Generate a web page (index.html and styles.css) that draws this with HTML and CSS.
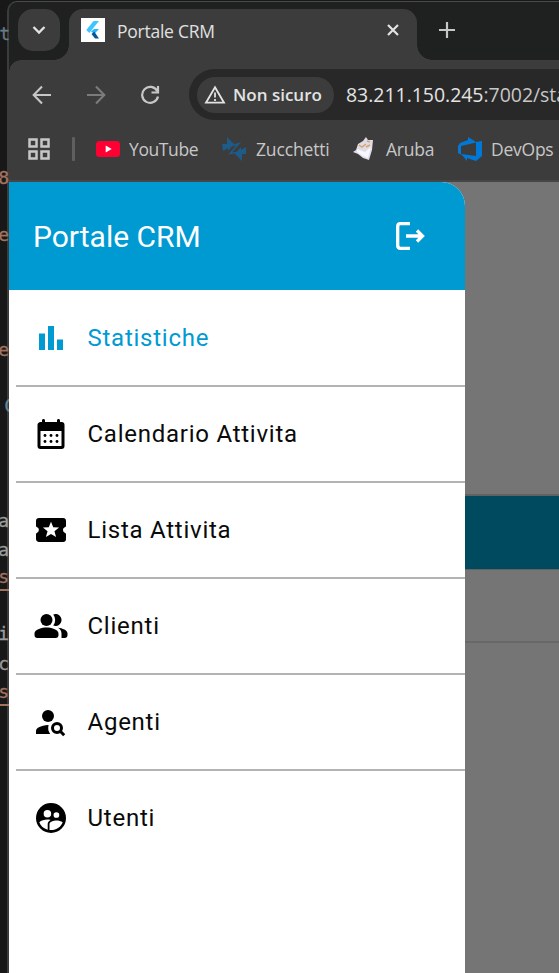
FILE: index.html
```html
<!DOCTYPE html>
<html lang="it">
<head>
<meta charset="utf-8">
<title>Portale CRM</title>
<link rel="stylesheet" href="styles.css">
</head>
<body>
<div class="window">
  <div class="tabs">
    <button class="tab-search"><svg width="14" height="10" viewBox="0 0 14 10"><path d="M1.500 2l5.500 5.500L12.500 2" fill="none" stroke="#e3e3e3" stroke-width="2.300"/></svg></button>
    <div class="tab">
      <svg class="favicon" width="24" height="24" viewBox="0 0 24 24"><path fill="#fff" d="M0 0h24v24H0z"/><path fill="#40c4ff" d="M12.500 3H18L8.300 15 5.300 12z"/><path fill="#29b6f6" d="M13 11h5l-4.700 5-3.300-2.500z"/><path fill="#01579b" d="M10.500 16l2.800-2.300L18 20.500h-4z"/></svg>
      <span class="tab-title">Portale CRM</span>
      <svg class="close" width="14" height="14" viewBox="0 0 14 14"><path d="M2 2l10 10M12 2L2 12" stroke="#e3e3e3" stroke-width="2.200"/></svg>
    </div>
    <svg class="plus" width="18" height="18" viewBox="0 0 18 18"><path d="M9 1v16M1 9h16" stroke="#c7c7c7" stroke-width="2.200"/></svg>
  </div>
  <div class="toolbar">
    <svg class="nav" width="20" height="20" viewBox="0 0 20 20"><path d="M19 10H2M10 1.500L1.700 10l8.300 8.500" fill="none" stroke="#c7c7c7" stroke-width="2.100"/></svg>
    <svg class="nav" width="20" height="20" viewBox="0 0 20 20"><path d="M1 10h17M10 1.500l8.300 8.500-8.300 8.500" fill="none" stroke="#7b7b7b" stroke-width="2.100"/></svg>
    <svg class="nav" width="20" height="20" viewBox="0 0 20 20"><path d="M18 11.500A8 8 0 1 1 17.200 6M18 1v6.500h-6.500" fill="none" stroke="#c7c7c7" stroke-width="2.200"/></svg>
    <div class="address">
      <div class="chip">
        <svg width="22" height="19" viewBox="0 0 22 19"><path d="M11 2.200L20 17.700H2z" fill="none" stroke="#e3e3e3" stroke-width="1.800"/><path d="M11 7.500v5M11 14v2" stroke="#e3e3e3" stroke-width="1.800"/></svg>
        <span>Non sicuro</span>
      </div>
      <span class="url">83.211.150.245<span class="path">:7002/sta</span></span>
    </div>
  </div>
  <div class="bookmarks">
    <svg class="apps" width="22" height="22" viewBox="0 0 22 22"><path d="M1.500 1.500h7v7h-7zM13.500 1.500h7v7h-7zM1.500 13.500h7v7h-7zM13.500 13.500h7v7h-7z" fill="none" stroke="#c7c7c7" stroke-width="2.500"/></svg>
    <i class="divider"></i>
    <div class="bookmark youtube"><svg width="24" height="24" viewBox="0 0 24 24"><rect y="4" width="24" height="16" rx="3.500" fill="#ff0033"/><path d="M9.700 8.500v7l6-3.500z" fill="#fff"/></svg><span>YouTube</span></div>
    <div class="bookmark zucchetti"><svg width="25" height="24" viewBox="0 0 25 24"><path fill="#1d5b88" d="M0 7h5V0l7 7-6 7v-3l-5 3zM24 17h-4v7l-7-7 6-7v3l5-3z"/><path d="M9 9l8-2.500L8 16.500l7-1" fill="none" stroke="#1d5b88" stroke-width="1.500"/></svg><span>Zucchetti</span></div>
    <div class="bookmark aruba"><svg width="22" height="24" viewBox="0 0 22 24"><path fill="#dedce6" d="M0 15l3-2 2-6 5-3 3-4 2 3 5 0-1 10-3 10-6-2-5-4z"/><path fill="#f8f7ff" d="M4 12l8 3 6-5-3 11-5-2-6-4z"/><path d="M6 8l3 2 4-3M14 4l3 1M13 10l4-2" stroke="#d7a46c" fill="none" stroke-width="1.500"/></svg><span>Aruba</span></div>
    <div class="bookmark devops"><svg width="24" height="24" viewBox="0 0 24 24"><path fill="#0078d7" fill-rule="evenodd" d="M0 9l2-3 8-3V0l8 5 6-1v15l-6 5-9-3v3l-5-6-4-2zM3 9v8l15 2V5.500z"/></svg><span>DevOps</span></div>
  </div>
  <div class="page">
    <aside class="drawer">
      <header>
        <h1>Portale CRM</h1>
        <svg width="30" height="30" viewBox="0 0 30 30"><path d="M15 2.700H5.500Q2.700 2.700 2.700 5.500v19q0 2.800 2.800 2.800H15" fill="none" stroke="#fff" stroke-width="3.300"/><path d="M11 15h16M22 9.500l5.500 5.500-5.500 5.500" fill="none" stroke="#fff" stroke-width="3.300"/></svg>
      </header>
      <nav>
        <a class="active"><svg viewBox="0 0 24 24"><path d="M4 9h4v11H4zM16 13h4v7h-4zM10 4h4v16h-4z"/></svg>Statistiche</a>
        <a><svg viewBox="0 0 24 24"><path fill-rule="evenodd" d="M7 2c.6 0 1 .4 1 1v1h8V3c0-.6.400-1 1-1s1 .4 1 1v1h1a2 2 0 0 1 2 2v14a2 2 0 0 1-2 2H5a2 2 0 0 1-2-2V6c0-1.100.900-2 2-2h1V3c0-.6.400-1 1-1zM5 10V20h14V10z"/><circle cx="8" cy="13" r=".95"/><circle cx="12" cy="13" r=".95"/><circle cx="16" cy="13" r=".95"/><circle cx="8" cy="17" r=".95"/><circle cx="12" cy="17" r=".95"/><circle cx="16" cy="17" r=".95"/></svg>Calendario Attivita</a>
        <a><svg viewBox="0 0 24 24"><path fill-rule="evenodd" d="M20 12c0-.8.500-1.500 1.200-1.800.5-.2.800-.6.800-1.100V6a2 2 0 0 0-2-2H4a2 2 0 0 0-2 2v3.100c0 .5.300.9.800 1.100a2 2 0 0 1 0 3.600c-.5.200-.8.600-.8 1.100V18c0 1.100.9 2 2 2h16a2 2 0 0 0 2-2v-3.100c0-.5-.3-.9-.8-1.100A2 2 0 0 1 20 12zM12 6.500l1.500 3.700 3.900.2-3.100 2.500 1.100 3.800L12 14.600l-3.400 2.100 1.100-3.800-3.100-2.500 3.900-.2z"/></svg>Lista Attivita</a>
        <a><svg viewBox="0 0 24 24"><circle cx="9" cy="8" r="4"/><path d="M9 13c-2.700 0-8 1.300-8 4v1a2 2 0 0 0 2 2h12a2 2 0 0 0 2-2v-1c0-2.700-5.300-4-8-4zM13.500 4.300a6 6 0 0 1 0 7.400A4 4 0 0 0 19 8a4 4 0 0 0-5.500-3.700zM16.700 13.200C18 14 19 15.300 19 17v3h2a2 2 0 0 0 2-2v-1c0-2.200-3.400-3.500-6.300-3.800z"/></svg>Clienti</a>
        <a><svg viewBox="0 0 24 24"><circle cx="10" cy="8" r="4"/><path d="M10.400 14c-2.200-.1-4.500.5-6.800 1.600-1 .5-1.600 1.500-1.600 2.600V20h9.500a6.900 6.900 0 0 1-1.100-6z"/><circle cx="16" cy="16" r="3" fill="none" stroke="#000" stroke-width="2"/><path d="M18.200 18.200l2.600 2.600" stroke="#000" stroke-width="2"/></svg>Agenti</a>
        <a><svg viewBox="0 0 24 24"><circle cx="12" cy="12" r="10"/><g fill="#fff"><circle cx="9.600" cy="9.200" r="2.500"/><circle cx="15.600" cy="10" r="1.900"/><path d="M4.200 14.800c1.100-1.200 3.500-1.800 5.400-1.800.7 0 1.400.1 2.100.3-1.400.8-1.900 1.700-1.900 2.700v3.800c-2.700-.8-4.800-2.500-5.600-5zM11 20v-4c0-1.400 2.700-2.300 4.600-2.300 1.400 0 3.200.4 4.200 1.100-1.100 3.100-4.400 5.600-8.800 5.200z"/></g></svg>Utenti</a>
      </nav>
    </aside>
    <div class="backdrop"><div class="band"></div><div class="section"></div></div>
  </div>
</div>
<div class="editor">
  <span class="code top">nt</span>
  <span class="code warm l1">8</span>
  <span class="code warm l2">e</span>
  <span class="code warm l3">e</span>
  <span class="code blue l4">C</span>
  <span class="code l5">a</span>
  <span class="code l6">a</span>
  <span class="code warm under l7">s</span>
  <span class="code l8">i</span>
  <span class="code l9">c</span>
  <span class="code warm under l10">s</span>
</div>
</body>
</html>
```
FILE: styles.css
```css
* { box-sizing: border-box; }
body { margin: 0; width: 559px; height: 973px; overflow: hidden; background: #181818; position: relative; font-family: "Open Sans", sans-serif; }
svg { display: block; flex: none; }
.editor { position: absolute; left: 0; top: 0; width: 9px; height: 973px; overflow: hidden; }
.code { position: absolute; right: 0; font: 18px/24px "DejaVu Sans Mono", monospace; color: #9c9c9c; -webkit-text-stroke: .3px currentColor; }
.warm { color: #a47360; }
.blue { color: #67879b; }
.under { border-bottom: 2px solid #a47360; }
.top { top: 22px; color: #657b85; right: -1px; }
.l1 { top: 166px; } .l2 { top: 223px; } .l3 { top: 338px; }
.l4 { top: 394px; right: -6px; } .l5 { top: 509px; } .l6 { top: 538px; }
.l7 { top: 565px; } .l8 { top: 622px; } .l9 { top: 652px; } .l10 { top: 680px; }
.window { position: absolute; left: 7px; top: 1px; width: 560px; height: 980px; background: #3c3c3c; border-left: 2px solid #3c3c3c; border-top: 1px solid #4a4a4a; border-top-left-radius: 10px; overflow: hidden; }
.tabs { height: 58px; display: flex; background: #1f2120; }
.tab-search { margin: 7px 9px 0; width: 42px; height: 42px; border: 0; border-radius: 15px; background: #3c3c3c; padding: 0; display: grid; place-items: center; }
.tab { position: relative; margin-top: 7px; width: 348px; height: 51px; padding: 9px 17px 0 12px; border-radius: 14px 14px 0 0; background: #3c3c3c; display: flex; }
.tab::before, .tab::after { content: ""; position: absolute; bottom: 0; width: 15px; height: 15px; }
.tab::before { right: 100%; background: radial-gradient(circle at 0 0, transparent 14.500px, #3c3c3c 15px); }
.tab::after { left: 100%; background: radial-gradient(circle at 100% 0, transparent 14.500px, #3c3c3c 15px); }
.tab-title { margin: 1px auto 0 12px; font-size: 17.500px; line-height: 24px; color: #e0e0e0; white-space: nowrap; letter-spacing: -.25px; }
.close { margin-top: 5px; }
.plus { margin: 19px 0 0 21px; }
.toolbar { height: 60px; padding: 9px 0 0 23px; display: flex; background: #3c3c3c; position: relative; }
.toolbar::before { content: ""; position: absolute; left: 0; top: 0; width: 12px; height: 12px; background: radial-gradient(circle at 100% 100%, transparent 11.500px, #1f2120 12px); }
.nav { margin: 16px 34px 0 0; }
.address { flex: none; margin-left: -5px; width: 400px; height: 51px; border-radius: 26px 0 0 26px; background: #282828; display: flex; align-items: center; padding-left: 8px; }
.chip { flex: none; width: 137px; height: 36px; border-radius: 18px; background: #3c3c3c; display: flex; align-items: center; padding-left: 7px; gap: 7px; font-size: 17px; font-weight: 600; color: #e3e3e3; white-space: nowrap; letter-spacing: 0; }
.url { margin-left: 12px; font-size: 19.500px; color: #e3e3e3; white-space: nowrap; letter-spacing: -.1px; }
.url { letter-spacing: -.04px; }
.path { color: #c7c7c7; }
.bookmarks { height: 62px; display: flex; align-items: center; padding: 0 0 2px 19px; border-bottom: 2px solid #464646; font-size: 17.500px; letter-spacing: -.25px; color: #c7c7c7; }
.divider { margin: 0 21px 0 22px; width: 3px; height: 24px; background: #5f5f5f; border-radius: 1px; }
.bookmark { display: flex; align-items: center; gap: 9px; flex: none; white-space: nowrap; }
.youtube { width: 126px; letter-spacing: -.4px; }
.zucchetti { width: 131px; letter-spacing: -.15px; }
.aruba { width: 105px; gap: 11px; }
.page { display: flex; height: 791px; background: #757575; }
.drawer { width: 456px; height: 100%; background: #fff; border-top-right-radius: 24px; overflow: hidden; font-family: Roboto, sans-serif; }
header { height: 108px; padding: 0 40px 0 24px; background: #009ad3; display: flex; align-items: center; justify-content: space-between; color: #fff; }
h1 { margin: 2px 0 0; font-size: 30px; font-weight: 400; line-height: 36px; }
nav a { height: 96px; margin-left: 7px; padding-left: 17px; display: flex; align-items: center; gap: 18.500px; color: #0a0a0a; font-size: 24px; letter-spacing: .75px; position: relative; }
nav a + a::before { content: ""; position: absolute; left: 0; right: 0; top: -1px; height: 2px; background: #b3b3b3; }
nav svg { width: 36px; height: 36px; fill: #000; }
nav .active, nav .active svg { color: #009ad3; fill: #009ad3; }
.backdrop { flex: 1; padding-top: 312px; }
.band { height: 76px; background: #004a60; border: solid #626262; border-width: 2px 0 1px; }
.section { height: 73px; border-bottom: 2px solid #686868; }
```
